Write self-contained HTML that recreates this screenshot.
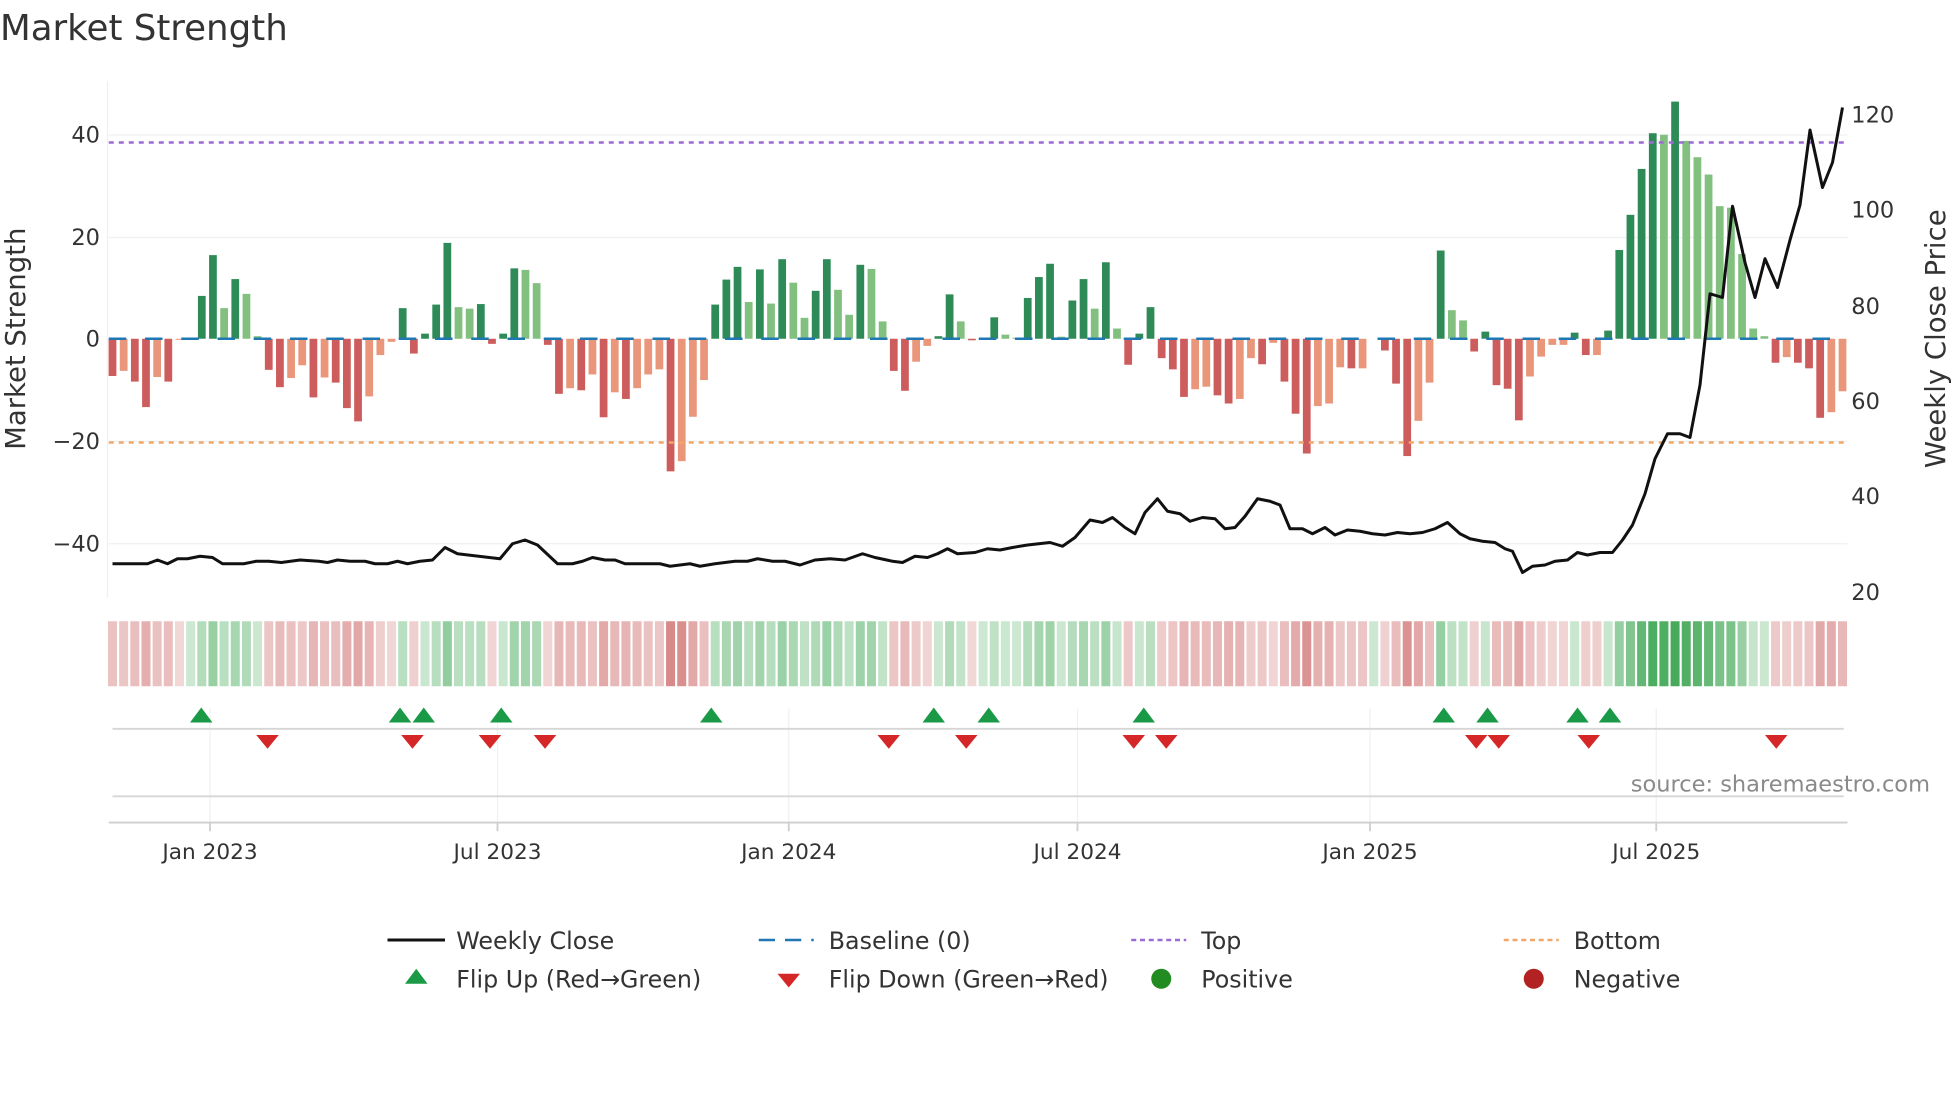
<!DOCTYPE html>
<html><head><meta charset="utf-8">
<style>
html,body{margin:0;padding:0;background:#fff;}
svg{display:block;}
text{font-family:"DejaVu Sans","Liberation Sans",sans-serif;fill:#333;}
</style></head>
<body>
<svg id="s" width="1960" height="1102" viewBox="0 0 1568 881.6" preserveAspectRatio="none" xmlns="http://www.w3.org/2000/svg">
<text x="0" y="32" font-size="28.5">Market Strength</text>
<g stroke="#eef0f2" stroke-width="1">
<line x1="87" y1="108" x2="1478" y2="108"/><line x1="87" y1="190" x2="1478" y2="190"/>
<line x1="87" y1="353" x2="1478" y2="353"/><line x1="87" y1="435" x2="1478" y2="435"/>
</g>
<line x1="86" y1="65" x2="86" y2="478" stroke="#eef0f2"/>
<g font-size="18" text-anchor="end">
<text x="80" y="114">40</text><text x="80" y="196">20</text><text x="80" y="277">0</text>
<text x="80" y="359">−20</text><text x="80" y="441">−40</text>
</g>
<g font-size="18">
<text x="1481" y="98">120</text><text x="1481" y="174">100</text><text x="1481" y="251">80</text>
<text x="1481" y="327">60</text><text x="1481" y="403">40</text><text x="1481" y="480">20</text>
</g>
<text transform="translate(20,271) rotate(-90)" font-size="22" text-anchor="middle">Market Strength</text>
<text transform="translate(1556,271) rotate(-90)" font-size="22" text-anchor="middle">Weekly Close Price</text>
<g id="bars"></g>
<line x1="87" y1="271" x2="1478" y2="271" stroke="#1f77b4" stroke-width="2" stroke-dasharray="14 15"/>
<line x1="87" y1="114" x2="1478" y2="114" stroke="#9b6ad6" stroke-width="2" stroke-dasharray="4 4"/>
<line x1="87" y1="354" x2="1478" y2="354" stroke="#f0a868" stroke-width="2" stroke-dasharray="4 4"/>
<polyline id="price" fill="none" stroke="#111" stroke-width="2.4" stroke-linejoin="round"/>
<g id="heat"></g>
<g stroke="#eef0f2" stroke-width="1">
<line x1="168" y1="567" x2="168" y2="658"/><line x1="398" y1="567" x2="398" y2="658"/>
<line x1="631" y1="567" x2="631" y2="658"/><line x1="862" y1="567" x2="862" y2="658"/>
<line x1="1096" y1="567" x2="1096" y2="658"/><line x1="1325" y1="567" x2="1325" y2="658"/>
</g>
<line x1="90" y1="583" x2="1475" y2="583" stroke="#d6d6d6" stroke-width="1.5"/>
<line x1="90" y1="637" x2="1475" y2="637" stroke="#d6d6d6" stroke-width="1.5"/>
<line x1="87" y1="658" x2="1478" y2="658" stroke="#cfcfcf" stroke-width="1.5"/>
<g stroke="#cfcfcf" stroke-width="1.5">
<line x1="168" y1="658" x2="168" y2="665"/><line x1="398" y1="658" x2="398" y2="665"/>
<line x1="631" y1="658" x2="631" y2="665"/><line x1="862" y1="658" x2="862" y2="665"/>
<line x1="1096" y1="658" x2="1096" y2="665"/><line x1="1325" y1="658" x2="1325" y2="665"/>
</g>
<g id="marks"></g>
<text x="1544" y="633" font-size="18" text-anchor="end" style="fill:#8a8a8a">source: sharemaestro.com</text>
<g font-size="17.3" text-anchor="middle">
<text x="168" y="687">Jan 2023</text><text x="398" y="687">Jul 2023</text><text x="631" y="687">Jan 2024</text>
<text x="862" y="687">Jul 2024</text><text x="1096" y="687">Jan 2025</text><text x="1325" y="687">Jul 2025</text>
</g>
<g font-size="19">
<line x1="310" y1="752" x2="356" y2="752" stroke="#111" stroke-width="2.4"/>
<text x="365" y="759">Weekly Close</text>
<line x1="607" y1="752" x2="651" y2="752" stroke="#1f77b4" stroke-width="2" stroke-dasharray="13 8"/>
<text x="663" y="759">Baseline (0)</text>
<line x1="905" y1="752" x2="949" y2="752" stroke="#9b6ad6" stroke-width="2" stroke-dasharray="4 3"/>
<text x="961" y="759">Top</text>
<line x1="1203" y1="752" x2="1247" y2="752" stroke="#f0a868" stroke-width="2" stroke-dasharray="4 3"/>
<text x="1259" y="759">Bottom</text>
<polygon points="324,787 342,787 333,775" fill="#1a9a46"/>
<text x="365" y="790">Flip Up (Red→Green)</text>
<polygon points="622,779 640,779 631,790" fill="#d62728"/>
<text x="663" y="790">Flip Down (Green→Red)</text>
<circle cx="929" cy="783" r="8" fill="#228b22"/>
<text x="961" y="790">Positive</text>
<circle cx="1227" cy="783" r="8" fill="#b22222"/>
<text x="1259" y="790">Negative</text>
</g>
</svg>
<script>
var d="R-7.3 r-6.3 R-8.4 R-13.4 r-7.5 R-8.4 r-0.2 z0 G8.4 G16.4 g6 G11.7 g8.8 g0.5 R-6.1 R-9.5 r-7.7 r-5.2 R-11.5 r-7.6 R-8.6 R-13.6 R-16.2 r-11.3 r-3.2 r-0.6 G6 R-2.9 G1 G6.7 G18.8 g6.2 g5.9 G6.8 R-1 G1 G13.8 g13.5 g10.9 R-1.2 R-10.8 r-9.7 R-10.1 r-7 R-15.4 r-10.5 R-11.8 r-9.7 r-7 r-6 R-26 r-24 r-15.3 r-8.1 G6.7 "+
"G11.6 G14.1 g7.2 G13.6 g6.9 G15.6 g11 g4.1 G9.4 G15.6 g9.6 g4.7 G14.5 g13.7 g3.4 R-6.3 R-10.2 r-4.5 r-1.4 G0.5 G8.7 g3.4 R-0.3 z0 G4.2 g0.8 g0.2 G8 G12.1 G14.7 g0.4 G7.5 G11.7 g5.9 G15 g2 R-5.1 G1 G6.2 R-3.8 R-6 R-11.4 r-9.9 r-9.4 R-11.1 R-12.7 r-11.8 r-3.8 R-5 r-0.8 R-8.4 R-14.7 R-22.5 "+
"r-13.2 r-12.7 r-5.6 R-5.8 r-5.8 z0 R-2.3 R-8.8 R-23 r-16.1 r-8.6 G17.3 g5.6 g3.6 R-2.5 G1.4 R-9.1 R-9.8 R-16 r-7.4 r-3.5 r-1.2 r-1.2 G1.2 R-3.2 r-3.2 G1.6 G17.4 G24.3 G33.3 G40.3 g40 G46.5 g38.8 g35.6 g32.2 g26 g25.7 g16.6 g2 g0.5 R-4.7 r-3.6 R-4.7 R-5.8 R-15.5 r-14.4 r-10.3";
var a=d.split(" "),col={G:"#2e8b57",g:"#82c07f",R:"#cd5c5c",r:"#e9967a",z:"#fff"};
var ns="http://www.w3.org/2000/svg",B=document.getElementById("bars"),H=document.getElementById("heat");
function el(t,o,p){var e=document.createElementNS(ns,t);for(var k in o)e.setAttribute(k,o[k]);p.appendChild(e);return e;}
var step=(1474-90)/(a.length-1);
function mix(c1,c2,t){var r=[];for(var i=0;i<3;i++)r.push(Math.round(c1[i]+(c2[i]-c1[i])*t));return "rgb("+r.join(",")+")";}
a.forEach(function(s,i){var t=s[0],v=parseFloat(s.slice(1));var x=90+i*step;
 if(t!="z"&&Math.abs(v)>0.05){var h=Math.abs(v)*4.08;el("rect",{x:x-3.1,y:v>0?271-h:271,width:6.2,height:h,fill:col[t]},B);}
 var c;if(v>=0){var k=Math.min(1,0.15+v/50);c=mix([228,243,231],[70,170,90],k);}else{var k=Math.min(1,0.12+(-v)/34);c=mix([246,228,228],[212,125,125],k);}
 el("rect",{x:x-3.6,y:497,width:7.2,height:52,fill:c},H);
});
var p="90,451 118,451 126,448 134,451 142,447 150,447 160,445 170,446 178,451 195,451 205,449 215,449 225,450 240,448 255,449 262,450 270,448 280,449 292,449 300,451 310,451 318,449 326,451 336,449 346,448 356,438 366,443 400,447 410,435 420,432 430,436 446,451 458,451 466,449 474,446 484,448 492,448 500,451 520,451 528,451 536,453 552,451 560,453 572,451 588,449 598,449 606,447 618,449 628,449 640,452 652,448 664,447 676,448 690,443 700,446 714,449 722,450 732,445 742,446 750,443 758,439 766,443 780,442 790,439 800,440 810,438 822,436 840,434 850,437 860,430 872,416 882,418 890,414 900,422 908,427 916,410 926,399 934,409 944,411 952,417 962,414 972,415 980,423 988,422 996,413 1006,399 1016,401 1024,404 1032,423 1042,423 1050,427 1060,422 1068,428 1078,424 1088,425 1098,427 1108,428 1118,426 1128,427 1138,426 1148,423 1158,418 1168,427 1176,431 1186,433 1196,434 1204,439 1210,441 1218,458 1226,453 1236,452 1244,449 1254,448 1262,442 1270,444 1280,442 1290,442 1298,432 1306,420 1316,395 1324,367 1334,347 1344,347 1352,350 1360,308 1368,235 1378,238 1386,165 1396,210 1404,238 1412,207 1422,230 1432,192 1440,164 1448,104 1458,150 1466,130 1474,86";
document.getElementById("price").setAttribute("points",p);
var M=document.getElementById("marks");
[161,320,339,401,569,747,791,915,1155,1190,1262,1288].forEach(function(x){el("polygon",{points:(x-9)+",578 "+(x+9)+",578 "+x+",566",fill:"#1a9a46"},M);});
[214,330,392,436,711,773,907,933,1181,1199,1271,1421].forEach(function(x){el("polygon",{points:(x-9)+",588 "+(x+9)+",588 "+x+",599",fill:"#d62728"},M);});
</script>
</body></html>
